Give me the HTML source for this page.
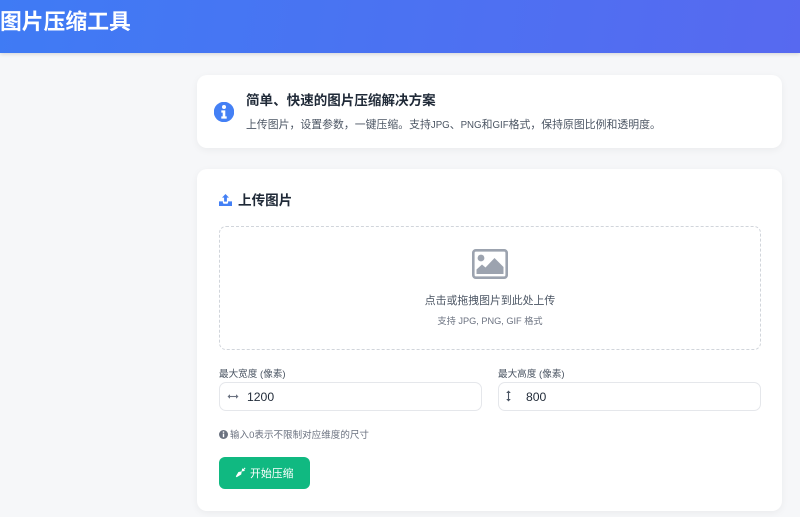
<!DOCTYPE html>
<html lang="zh">
<head>
<meta charset="utf-8">
<title>图片压缩工具</title>
<style>
html,body{margin:0;padding:0}
body{width:800px;height:517px;overflow:hidden;position:relative;background:#f6f7f9;font-family:"Liberation Sans","Noto Sans CJK SC",sans-serif;color:#1f2937}
div,span,svg{white-space:nowrap}
div,svg{position:absolute}
.header{left:0;top:0;width:800px;height:53px;background:linear-gradient(100deg,#3f7bf4,#5769f0);box-shadow:0 1px 4px rgba(0,0,0,.15)}
.title{left:0;top:5px;font-size:21.8px;line-height:34px;font-weight:700;color:#fff}
.card{background:#fff;border-radius:10px;box-shadow:0 2px 8px rgba(0,0,0,.05)}
.drop{left:219px;top:226px;width:540px;height:122px;border:1px dashed #d1d5db;border-radius:7px}
.input{top:382px;height:27px;border:1px solid #e5e7eb;border-radius:7px;background:#fff}
.label{top:368px;font-size:9.6px;line-height:14px;color:#4b5563}
.val{top:388px;font-size:12.2px;line-height:18px;color:#1f2937}
.l{font-size:9.7px}
.c{font-family:"Noto Sans CJK TC",sans-serif}
</style>
</head>
<body>
<div class="header"></div>
<div class="title">图片压缩工具</div>

<div class="card" style="left:197px;top:75px;width:585px;height:73px"></div>
<svg style="left:214px;top:102px" width="20" height="20" viewBox="0 0 20 20"><circle cx="10" cy="10" r="10.2" fill="#4480f5"/><circle cx="10" cy="5" r="2" fill="#fff"/><path d="M7.3 8.4h4v6h1.4v2.2H7.3v-2.2h1.4v-3.8H7.3z" fill="#fff"/></svg>
<div style="left:246px;top:91px;font-size:13.55px;line-height:20px;font-weight:700;color:#1f2937">简单、快速的图片压缩解决方案</div>
<div style="left:246px;top:116px;font-size:10.88px;line-height:17px;color:#4b5563">上传图片<span class="c">，</span>设置参数<span class="c">，</span>一键压缩。支持<span class="l">JPG</span>、<span class="l">PNG</span>和<span class="l">GIF</span>格式<span class="c">，</span>保持原图比例和透明度。</div>

<div class="card" style="left:197px;top:169px;width:585px;height:342px"></div>
<svg style="left:219px;top:194px" width="13" height="12" viewBox="0 0 13 12"><path d="M6.5 0 10 3.6H7.9V7.6H5.1V3.6H3zM0 7.4h3.9V8.8a1 1 0 0 0 1 .9h3.2a1 1 0 0 0 1-.9V7.4H13V12H0z" fill="#4480f5"/></svg>
<div style="left:238px;top:191px;font-size:13.6px;line-height:20px;font-weight:700;color:#1f2937">上传图片</div>

<div class="drop"></div>
<svg style="left:472px;top:249px" width="36" height="30" viewBox="0 0 36 30"><rect x="1.3" y="1.3" width="33.4" height="27.4" rx="2.5" fill="none" stroke="#9ca3af" stroke-width="2.6"/><circle cx="9" cy="9" r="3.4" fill="#9ca3af"/><path d="M4.5 25v-4.5l5.5-5 3.5 3 9-9.5 9 9V25z" fill="#9ca3af"/></svg>
<div style="left:219px;top:293px;width:542px;text-align:center;font-size:10.88px;line-height:17px;color:#4b5563">点击或拖拽图片到此处上传</div>
<div style="left:219px;top:314px;width:542px;text-align:center;font-size:9.2px;line-height:14px;color:#6b7280">支持 JPG, PNG, GIF 格式</div>

<div class="label" style="left:219px">最大宽度 (像素)</div>
<div class="input" style="left:219px;width:261px"></div>
<svg style="left:227px;top:393px" width="12" height="7" viewBox="0 0 12 7"><path d="M2.5 3.5h7" stroke="#6b7280" stroke-width="1.1" fill="none"/><path d="M0.5 3.5 3 1.2v4.6zM11.5 3.5 9 1.2v4.6z" fill="#6b7280"/></svg>
<div class="val" style="left:247px">1200</div>

<div class="label" style="left:498px">最大高度 (像素)</div>
<div class="input" style="left:498px;width:261px"></div>
<svg style="left:505px;top:390px" width="7" height="12" viewBox="0 0 7 12"><path d="M3.5 2.5v7" stroke="#4b5563" stroke-width="1.1" fill="none"/><path d="M3.5 0.5 1.2 3h4.6zM3.5 11.5 1.2 9h4.6z" fill="#4b5563"/></svg>
<div class="val" style="left:526px">800</div>

<svg style="left:219px;top:430px" width="9" height="9" viewBox="0 0 9 9"><circle cx="4.5" cy="4.5" r="4.5" fill="#6b7280"/><rect x="3.8" y="1.4" width="1.4" height="1.4" fill="#fff"/><rect x="3.8" y="3.6" width="1.4" height="3.6" fill="#fff"/></svg>
<div style="left:230px;top:429px;font-size:9.55px;line-height:14px;color:#6b7280">输入0表示不限制对应维度的尺寸</div>

<div style="left:219px;top:457px;width:91px;height:32px;background:#10b981;border-radius:6px"></div>
<svg style="left:235px;top:467px" width="11" height="11" viewBox="0 0 11 11"><path d="M10.5 1.2 9.8.5 8.2 2.1 7.2 1.2 6.6 4.4 3.4 5 .8 9.4l.8.8 4.6-2.7.6-3 3.2-.6-.9-1z" fill="#fff"/></svg>
<div style="left:250px;top:466px;font-size:10.9px;line-height:17px;color:#fff">开始压缩</div>
</body>
</html>
